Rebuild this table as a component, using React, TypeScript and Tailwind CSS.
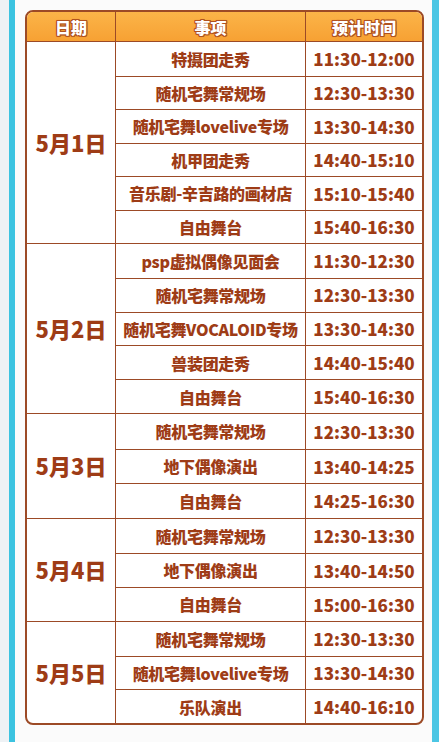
type Row = { title: string; time: string };
type Group = { date: string; rowClass: string; rows: Row[] };

const schedule: Group[] = [
  {
    date: "5月1日",
    rowClass: "h-[33.5px]",
    rows: [
      { title: "特摄团走秀", time: "11:30-12:00" },
      { title: "随机宅舞常规场", time: "12:30-13:30" },
      { title: "随机宅舞lovelive专场", time: "13:30-14:30" },
      { title: "机甲团走秀", time: "14:40-15:10" },
      { title: "音乐剧-辛吉路的画材店", time: "15:10-15:40" },
      { title: "自由舞台", time: "15:40-16:30" },
    ],
  },
  {
    date: "5月2日",
    rowClass: "h-[33.8px]",
    rows: [
      { title: "psp虚拟偶像见面会", time: "11:30-12:30" },
      { title: "随机宅舞常规场", time: "12:30-13:30" },
      { title: "随机宅舞VOCALOID专场", time: "13:30-14:30" },
      { title: "兽装团走秀", time: "14:40-15:40" },
      { title: "自由舞台", time: "15:40-16:30" },
    ],
  },
  {
    date: "5月3日",
    rowClass: "h-[34.6px]",
    rows: [
      { title: "随机宅舞常规场", time: "12:30-13:30" },
      { title: "地下偶像演出", time: "13:40-14:25" },
      { title: "自由舞台", time: "14:25-16:30" },
    ],
  },
  {
    date: "5月4日",
    rowClass: "h-[34px]",
    rows: [
      { title: "随机宅舞常规场", time: "12:30-13:30" },
      { title: "地下偶像演出", time: "13:40-14:50" },
      { title: "自由舞台", time: "15:00-16:30" },
    ],
  },
  {
    date: "5月5日",
    rowClass: "h-[33.8px]",
    rows: [
      { title: "随机宅舞常规场", time: "12:30-13:30" },
      { title: "随机宅舞lovelive专场", time: "13:30-14:30" },
      { title: "乐队演出", time: "14:40-16:10" },
    ],
  },
];

const headText =
  "text-[16px] font-black text-white [text-shadow:1px_0_0_#b0521f,-1px_0_0_#b0521f,0_1px_0_#b0521f,0_-1px_0_#b0521f,1px_1px_0_#b0521f,-1px_-1px_0_#b0521f,1px_-1px_0_#b0521f,-1px_1px_0_#b0521f,0_0_2px_#b0521f]";

export default function App() {
  return (
    <div className="flex h-[742px] w-[439px] overflow-hidden bg-[#f2f4f6] font-['Noto_Sans_CJK_SC',sans-serif] text-[#9e3c16]">
      <div className="w-[9px] bg-[#eef2f5]" />
      <div className="w-[6px] bg-[#3cc3e0]" />
      <div className="flex-1 bg-[#fbfbfb] pl-[10px] pr-[8px] pt-[10px]">
        <div className="overflow-hidden rounded-[8px] border-2 border-[#9c4a26] bg-white">
          <div className="flex h-[30px] border-b border-[#9c4a26] bg-gradient-to-b from-[#fbb448] to-[#f7a133]">
            <div className={`flex w-[89px] items-center justify-center border-r border-[#9c4a26] ${headText}`}>
              日期
            </div>
            <div className={`flex w-[190px] items-center justify-center border-r border-[#9c4a26] ${headText}`}>
              事项
            </div>
            <div className={`flex flex-1 items-center justify-center ${headText}`}>预计时间</div>
          </div>

          {schedule.map((group, gi) => (
            <div key={group.date} className={`flex ${gi > 0 ? "border-t border-[#9c4a26]" : ""}`}>
              <div className="flex w-[89px] items-center justify-center border-r border-[#9c4a26] text-[22px] font-black">
                {group.date}
              </div>
              <div className="flex-1">
                {group.rows.map((row, ri) => (
                  <div
                    key={row.title + row.time}
                    className={`flex ${group.rowClass} ${ri > 0 ? "border-t border-[#9c4a26]" : ""}`}
                  >
                    <div className="flex w-[190px] items-center justify-center border-r border-[#9c4a26] text-[16px] font-black tracking-[-0.3px]">
                      {row.title}
                    </div>
                    <div className="flex flex-1 items-center justify-center text-[17px] font-black">{row.time}</div>
                  </div>
                ))}
              </div>
            </div>
          ))}
        </div>
      </div>
      <div className="w-[7px] bg-[#4cc6e4]" />
    </div>
  );
}
